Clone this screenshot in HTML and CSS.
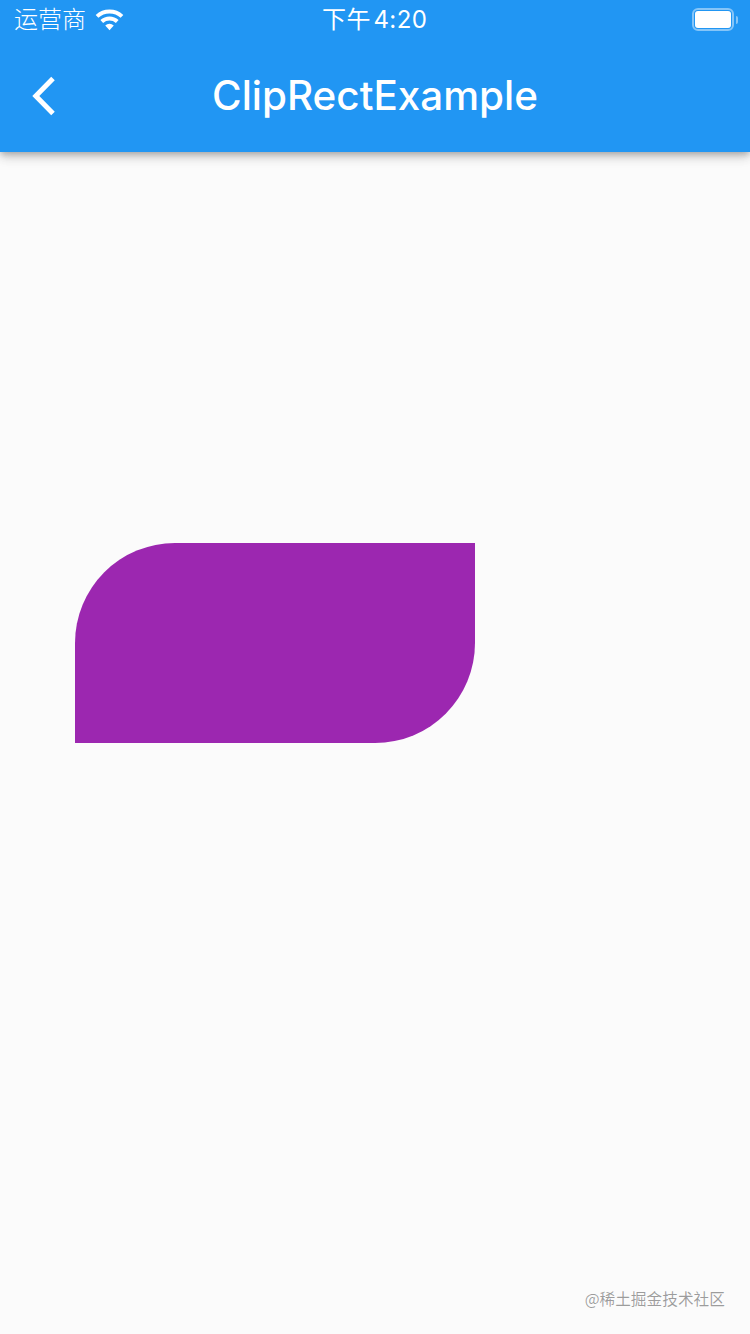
FILE: index.html
```html
<!DOCTYPE html>
<html lang="zh">
<head>
<meta charset="utf-8">
<title>ClipRectExample</title>
<link rel="stylesheet" href="styles.css">
</head>
<body>
<div class="page">
  <header class="appbar">
    <div class="status">
      <div class="status-left">
        <span class="carrier">运营商</span>
        <svg class="wifi" viewBox="0 0 30 22" aria-hidden="true">
          <path d="M15 21.5 L10.6 16.6 A6.6 6.6 0 0 1 19.4 16.6 Z"/>
          <path d="M8.4 14.2 L5.6 11.1 A13.8 13.8 0 0 1 24.4 11.1 L21.6 14.2 A9.8 9.8 0 0 0 8.4 14.2 Z"/>
          <path d="M3.5 8.8 L0.7 5.7 A21 21 0 0 1 29.3 5.7 L26.5 8.8 A17 17 0 0 0 3.5 8.8 Z"/>
        </svg>
      </div>
      <span class="clock">下午 4:20</span>
      <div class="battery">
        <div class="battery-body"><div class="battery-fill"></div></div>
        <div class="battery-cap"></div>
      </div>
    </div>
    <div class="toolbar">
      <svg class="back" viewBox="0 0 28 42" aria-hidden="true">
        <path d="M23 2.5 L5.8 20 L23 37.5"/>
      </svg>
      <h1 class="title">ClipRectExample</h1>
    </div>
  </header>
  <main class="content">
    <div class="clip"></div>
  </main>
  <div class="watermark">@稀土掘金技术社区</div>
</div>
</body>
</html>
```
FILE: styles.css
```css
html, body {
  margin: 0;
  padding: 0;
}
.page {
  position: relative;
  width: 750px;
  height: 1334px;
  overflow: hidden;
  display: flex;
  flex-direction: column;
  background: #fbfbfb;
  font-family: Inter, "Liberation Sans", "Noto Sans CJK SC", sans-serif;
}
.appbar {
  position: relative;
  height: 152px;
  flex: none;
  background: #2196f3;
  color: #fff;
  box-shadow: 0 3px 6px -1px rgba(0,0,0,.22), 0 6px 10px rgba(0,0,0,.12), 0 2px 14px rgba(0,0,0,.08);
}
.status {
  position: relative;
  height: 40px;
  display: flex;
  align-items: center;
  justify-content: space-between;
  padding: 0 12px 0 14px;
}
.status-left {
  display: flex;
  align-items: center;
  gap: 9px;
}
.carrier {
  font-family: "Noto Sans CJK SC", sans-serif;
  font-size: 24px;
  font-weight: 300;
  line-height: 36px;
  margin-bottom: 4px;
}
.wifi {
  width: 29px;
  height: 22px;
  fill: #fff;
  margin-top: -1px;
}
.clock {
  position: absolute;
  left: 322px;
  top: 0;
  font-size: 24px;
  line-height: 40px;
  letter-spacing: .4px;
  word-spacing: -4.5px;
  font-family: Inter, "Noto Sans CJK SC", sans-serif;
}
.battery {
  display: flex;
  align-items: center;
  gap: 2px;
  margin-bottom: 1px;
}
.battery-body {
  box-sizing: border-box;
  width: 42px;
  height: 23px;
  padding: 1px;
  border: 2px solid rgba(255,255,255,.45);
  border-radius: 6px;
}
.battery-fill {
  height: 100%;
  background: #fff;
  border-radius: 3px;
}
.battery-cap {
  width: 2px;
  height: 8px;
  background: rgba(255,255,255,.45);
  border-radius: 0 2px 2px 0;
}
.toolbar {
  position: relative;
  height: 112px;
  display: flex;
  align-items: center;
  justify-content: center;
}
.back {
  position: absolute;
  left: 30px;
  top: 36px;
  width: 28px;
  height: 42px;
  fill: none;
  stroke: #fff;
  stroke-width: 5;
}
.title {
  margin: 0;
  font-size: 40.4px;
  font-weight: 500;
  line-height: 48px;
}
.content {
  flex: 1;
  padding: 391px 0 0 75px;
}
.clip {
  width: 400px;
  height: 200px;
  background: #9c27b0;
  border-radius: 100px 0 100px 0;
}
.watermark {
  position: absolute;
  right: 25px;
  bottom: 24px;
  font-family: "Noto Sans CJK SC", sans-serif;
  font-size: 15.7px;
  line-height: 22px;
  color: rgba(0,0,0,.38);
}
```
